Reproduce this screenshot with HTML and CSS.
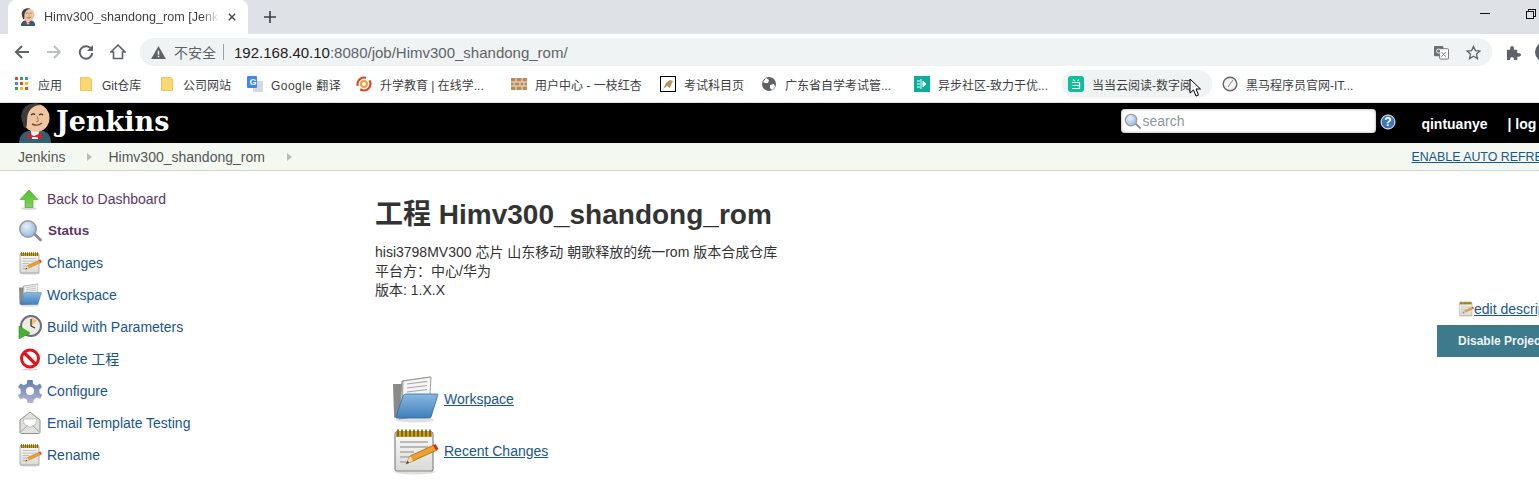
FILE: index.html
```html
<!DOCTYPE html>
<html lang="zh-CN">
<head>
  <meta charset="UTF-8">
  <meta name="viewport" content="width=device-width, initial-scale=1.0">
  <title>Himv300_shandong_rom [Jenkins]</title>
  <link rel="stylesheet" href="styles.css">
</head>
<body>
  <!-- icons used more than once -->
  <svg class="defs" width="0" height="0" aria-hidden="true">
    <defs>
      <linearGradient id="blueFront" x1="0" y1="0" x2="0" y2="1">
        <stop offset="0" stop-color="#8ab8e0"/>
        <stop offset="1" stop-color="#3f7fbc"/>
      </linearGradient>
      <linearGradient id="pageFill" x1="0" y1="0" x2="0" y2="1">
        <stop offset="0" stop-color="#fbfbfa"/>
        <stop offset="1" stop-color="#d9d9d6"/>
      </linearGradient>
      <linearGradient id="gearFill" x1="0" y1="0" x2="0" y2="1">
        <stop offset="0" stop-color="#5f7fae"/>
        <stop offset="1" stop-color="#b7b3d4"/>
      </linearGradient>
      <linearGradient id="greenFill" x1="0" y1="0" x2="0" y2="1">
        <stop offset="0" stop-color="#4fc42e"/>
        <stop offset="1" stop-color="#7fd05a"/>
      </linearGradient>
      <radialGradient id="glassFill" cx="0.4" cy="0.35" r="0.7">
        <stop offset="0" stop-color="#e6f1fa"/>
        <stop offset="1" stop-color="#8fb6dc"/>
      </radialGradient>
      <symbol id="i-notepad" viewBox="0 0 48 48">
        <ellipse cx="24" cy="45" rx="20" ry="2.5" fill="#000" opacity=".12"/>
        <rect x="4" y="5" width="38" height="39" rx="2" fill="url(#pageFill)" stroke="#858585" stroke-width="1.2"/>
        <rect x="5" y="4" width="36" height="6" fill="#c9a227"/>
        <path d="M7 3v6M11 3v6M15 3v6M19 3v6M23 3v6M27 3v6M31 3v6M35 3v6M39 3v6" stroke="#6e5a12" stroke-width="1.6" stroke-linecap="round"/>
        <path d="M9 15h28M9 20h28M9 25h14M9 30h10M9 35h6" stroke="#a9a9a6" stroke-width="1.3"/>
        <path d="M15 37l4-8 24-11 3 5-24 11z" fill="#eda02b" stroke="#8f5a10" stroke-width=".7"/>
        <path d="M15 37l4-8 3 5z" fill="#efd9b0"/>
        <path d="M15 37l1.500-3 1.800 1.500z" fill="#333"/>
        <path d="M42 18.500l2.500-1.500 3 5-2 1.500z" fill="#e0242a"/>
      </symbol>
      <symbol id="i-folder" viewBox="0 0 48 48">
        <ellipse cx="24" cy="45" rx="19" ry="2.5" fill="#000" opacity=".12"/>
        <path d="M2 9h8l3-3 0 36-8 1c-1.500 0-2-1-2-2z" fill="#8a8a88"/>
        <path d="M8 44l3-38 28-4-2 38z" fill="#d0d0ce" stroke="#8a8a88" stroke-width=".8"/>
        <path d="M12 6l28-4-2 36-27 5z" fill="#f4f4f2" stroke="#8a8a88" stroke-width=".8"/>
        <path d="M16 9l20-2.500M16 13l20-2.500M16 17l20-2.500" stroke="#a5a5a3" stroke-width="1.200"/>
        <path d="M16 19h30c.8 0 1 .6.8 1.200L40 42c-.3.8-.8 1-1.500 1H6c-1 0-1.300-.6-1-1.500L12 21c.4-1.300 2-2 4-2z" fill="url(#blueFront)" stroke="#35699e" stroke-width=".8"/>
      </symbol>
      <symbol id="i-butler" viewBox="0 0 34 40">
        <path d="M1 40c0-7 4-11 9-12h15c5 1 8 5 8 12z" fill="#2f5f70"/>
        <path d="M13 28h8l-1 8h-6z" fill="#f2f2f0"/>
        <path d="M11 31l5 2 5-2 3-1v6l-6-2h-3l-6 2v-6z" fill="#d8202a"/>
        <ellipse cx="18" cy="15" rx="13.500" ry="14" fill="#f0c5a0"/>
        <path d="M5 21C1 12 4 3 13 1c3-1 7-1 10 1C14 2 9 8 9 18c0 2 0 5-1 7-2 0-3-2-3-4z" fill="#3c3c3c"/>
        <path d="M13 12c2-1.500 3-1.500 4 0M21 12c1.500-1 3-1 4 0" stroke="#333" stroke-width="1.200" fill="none"/>
        <path d="M14 21c3 1.500 7 1.500 10-1" stroke="#7a4a30" stroke-width="1.400" fill="none"/>
        <path d="M19 13l1.500 5-2.500.8" stroke="#b37a55" stroke-width="1" fill="none"/>
      </symbol>
      <symbol id="i-lens" viewBox="0 0 24 24">
        <path d="M14.500 15l2-2 7 7c.6.6.6 1.500 0 2-.6.6-1.500.6-2 0z" fill="#8d8d8b"/>
        <circle cx="10" cy="10" r="8.200" fill="url(#glassFill)" stroke="#9a9a98" stroke-width="1.600"/>
      </symbol>
    </defs>
  </svg>

  <div class="tabstrip">
    <div class="tab">
      <svg class="tab-favicon"><use href="#i-butler"/></svg>
      <span class="tab-title">Himv300_shandong_rom [Jenkins]</span>
      <svg class="tab-close" viewBox="0 0 10 10"><path d="M1 1l8 8M9 1l-8 8"/></svg>
    </div>
    <svg class="tab-new" viewBox="0 0 12 12"><path d="M6 0v12M0 6h12"/></svg>
    <div class="window-btns">
      <span class="win-min"></span>
      <span class="win-restore"></span>
    </div>
  </div>

  <div class="toolbar">
    <svg class="nav-icon" viewBox="0 0 16 16"><path d="M15 8H2M8 2L2 8l6 6" class="nav-stroke"/></svg>
    <svg class="nav-icon" viewBox="0 0 16 16"><path d="M1 8h13M8 2l6 6-6 6" class="nav-stroke nav-off"/></svg>
    <svg class="nav-icon" viewBox="0 0 16 16"><path d="M13.500 5.500A6.200 6.200 0 1 0 14.200 9" class="nav-stroke"/><path d="M15 1v6H9z" fill="#5f6368"/></svg>
    <svg class="nav-icon" viewBox="0 0 16 16"><path d="M8 1L1 8h2.500v6.500h9V8H15z" class="nav-stroke nav-thin"/></svg>
    <div class="omnibox">
      <svg class="warn" viewBox="0 0 16 14"><path d="M8 0l8 14H0z" fill="#5f6368"/><path d="M7.200 5h1.600v4.500H7.200zM7.200 10.500h1.600V12H7.200z" fill="#f1f3f4"/></svg>
      <span class="insecure">不安全</span>
      <span class="omni-sep"></span>
      <span class="url"><b>192.168.40.10</b>:8080/job/Himv300_shandong_rom/</span>
      <svg class="omni-translate" viewBox="0 0 16 16"><rect x="0" y="1" width="10" height="11" rx="1" fill="#6b6f73"/><rect x="6" y="4" width="9.500" height="11" rx="1" fill="#fff" stroke="#6b6f73"/><path d="M8 7.500l4.500 5M12.500 7.500l-4.500 5" stroke="#6b6f73"/><circle cx="5" cy="6.500" r="2.200" fill="none" stroke="#fff"/></svg>
      <svg class="omni-star" viewBox="0 0 16 16"><path d="M8 1.500l2 4.500 4.800.5-3.600 3.200 1 4.800L8 12l-4.200 2.500 1-4.800L1.200 6.500 6 6z" fill="none" stroke="#5f6368" stroke-width="1.400"/></svg>
    </div>
    <svg class="puzzle" viewBox="0 0 16 16"><path d="M1 5h3.500C4 2 5.500 1 6.500 1S9 2 8.500 5H12v3.500c3-.5 4 1 4 2s-1 2.500-4 2V16H8.500c.5-2.500-1-3-2-3s-2.500.5-2 3H1z" fill="#5f6368"/></svg>
    <span class="avatar"></span>
  </div>

  <div class="bookmarks">
    <a class="bm bm-apps">
      <svg class="bm-icon" viewBox="0 0 14 14">
        <path d="M0 0h3v3H0z" fill="#ea4335"/><path d="M5 0h3v3H5z" fill="#34a853"/><path d="M10 0h3v3h-3z" fill="#4285f4"/>
        <path d="M0 5h3v3H0z" fill="#4285f4"/><path d="M5 5h3v3H5z" fill="#ea4335"/><path d="M10 5h3v3h-3z" fill="#fbbc04"/>
        <path d="M0 10h3v3H0z" fill="#34a853"/><path d="M5 10h3v3H5z" fill="#fbbc04"/><path d="M10 10h3v3h-3z" fill="#ea4335"/>
      </svg>
      应用
    </a>
    <a class="bm">
      <svg class="bm-icon" viewBox="0 0 16 16"><path d="M2.500 1.500h9l2 1.500v11.500h-11z" fill="#fbd774" stroke="#edc65a"/></svg>
      Git仓库
    </a>
    <a class="bm">
      <svg class="bm-icon" viewBox="0 0 16 16"><path d="M2.500 1.500h9l2 1.500v11.500h-11z" fill="#fbd774" stroke="#edc65a"/></svg>
      公司网站
    </a>
    <a class="bm bm-google">
      <svg class="bm-icon" viewBox="0 0 16 16"><rect x="6" y="5" width="10" height="11" fill="#d5d8dc"/><rect x="0" y="0" width="10" height="12" rx="1" fill="#4285f4"/><text x="2.500" y="9" class="g-letter">G</text></svg>
      Google 翻译
    </a>
    <a class="bm">
      <svg class="bm-icon" viewBox="0 0 16 16"><circle cx="8" cy="8" r="6.500" fill="none" stroke="#d9482b" stroke-width="2.200" stroke-dasharray="14 4"/><circle cx="8" cy="8" r="3" fill="none" stroke="#e9a23b" stroke-width="2"/></svg>
      升学教育 | 在线学...
    </a>
    <a class="bm">
      <svg class="bm-icon" viewBox="0 0 16 16"><rect y="2" width="16" height="12" fill="#b58a5c"/><path d="M0 6h16M0 10h16M5 2v4M11 2v4M3 6v4M9 6v4M13 6v4M5 10v4M11 10v4" stroke="#efe3d2"/></svg>
      用户中心 - 一枝红杏
    </a>
    <a class="bm">
      <svg class="bm-icon" viewBox="0 0 16 16"><rect x=".5" y=".5" width="15" height="15" fill="#fff" stroke="#000"/><path d="M3 13l3-6 4-3 3 1-2 4-1 3-3-2z" fill="#b8945a"/></svg>
      考试科目页
    </a>
    <a class="bm">
      <svg class="bm-icon" viewBox="0 0 16 16"><circle cx="8" cy="8" r="7" fill="#5f6368"/><path d="M5 2l3 2-1 3-3 0-2-1zM9 9l4-1 1 3-3 3-2-2z" fill="#fff"/></svg>
      广东省自学考试管...
    </a>
    <a class="bm">
      <svg class="bm-icon" viewBox="0 0 16 16"><rect width="16" height="16" fill="#0cae9b"/><path d="M7 3v10M3 5h3M3 8h3M3 11h3M9 5l3 3-3 3z" stroke="#fff" fill="#fff"/></svg>
      异步社区-致力于优...
    </a>
    <a class="bm bm-hover">
      <svg class="bm-icon" viewBox="0 0 16 16"><rect width="16" height="16" rx="3" fill="#0cc09a"/><path d="M5 3.500l1.500 1.500M11 3.500L9.500 5M4 6.500h7.500v6H4M4.500 9.500h7" stroke="#fff" fill="none" stroke-width="1.200"/></svg>
      <span class="bm-cut">当当云阅读-数字阅读</span>
      <svg class="cursor" viewBox="0 0 13 20"><path d="M1 1v14l3.500-3 2.500 6 2.500-1-2.500-6h4.500z" fill="#fff" stroke="#000"/></svg>
    </a>
    <a class="bm">
      <svg class="bm-icon" viewBox="0 0 16 16"><circle cx="8" cy="8" r="6.800" fill="#f4f4f4" stroke="#666" stroke-width="1.400"/><path d="M8 8l3-4M8 8l-2 3" stroke="#888"/></svg>
      黑马程序员官网-IT...
    </a>
  </div>

  <header class="jenkins-head">
    <svg class="logo-butler"><use href="#i-butler"/></svg>
    <span class="logo-text">Jenkins</span>
    <div class="search-box">
      <svg class="search-lens"><use href="#i-lens"/></svg>
      <span class="search-hint">search</span>
    </div>
    <svg class="help" viewBox="0 0 16 16"><circle cx="8" cy="8" r="7" fill="#3c78b5" stroke="#fff"/><text x="8" y="12" class="help-mark">?</text></svg>
    <a class="user">qintuanye</a>
    <a class="logout">| log out</a>
  </header>

  <div class="breadcrumbs">
    <a class="crumb">Jenkins</a>
    <span class="crumb-arrow"></span>
    <a class="crumb">Himv300_shandong_rom</a>
    <span class="crumb-arrow"></span>
    <a class="auto-refresh">ENABLE AUTO REFRESH</a>
  </div>

  <div class="page">
    <nav class="side">
      <a class="task task-visited">
        <svg class="task-icon" viewBox="0 0 24 24"><ellipse cx="11" cy="21.500" rx="8" ry="1.500" fill="#000" opacity=".15"/><path d="M11 3l9 9.500h-5v8H7v-8H2z" fill="url(#greenFill)" stroke="#4a9a2c" stroke-width=".6"/></svg>
        Back to Dashboard
      </a>
      <a class="task task-current">
        <svg class="task-icon"><use href="#i-lens"/></svg>
        Status
      </a>
      <a class="task">
        <svg class="task-icon"><use href="#i-notepad"/></svg>
        Changes
      </a>
      <a class="task">
        <svg class="task-icon"><use href="#i-folder"/></svg>
        Workspace
      </a>
      <a class="task">
        <svg class="task-icon" viewBox="0 0 24 24">
          <circle cx="13" cy="11" r="10" fill="#ecebe4" stroke="#6f6a85" stroke-width="2"/>
          <path d="M13 11V3a8 8 0 0 1 6 3z" fill="#f0c27a"/>
          <path d="M13 4v7l4 2" stroke="#333" stroke-width="1.200" fill="none"/>
          <path d="M1 11l11 7-11 6z" fill="#44b52a" stroke="#2f8a1c" stroke-width=".6"/>
        </svg>
        Build with Parameters
      </a>
      <a class="task">
        <svg class="task-icon" viewBox="0 0 24 24"><ellipse cx="12" cy="22.500" rx="8" ry="1.200" fill="#000" opacity=".15"/><circle cx="12" cy="11.500" r="8.500" fill="#fff" stroke="#e0141c" stroke-width="3"/><path d="M6 5.500l12 12" stroke="#e0141c" stroke-width="3.200"/></svg>
        Delete 工程
      </a>
      <a class="task">
        <svg class="task-icon" viewBox="0 0 24 24">
          <g fill="url(#gearFill)">
            <path d="M9.500 1h5l.8 4 3.400 1.500 3.300-2 2 3.500-2.700 2.700.3 3.300 2.700 2-2 3.800-3.700-1.300-2.600 2L15 24H9.500l-.8-3.500-3-1.500L2.500 20.500 0 16.500l2.700-2.300V10.500L0 8l2.500-3.500 3.200 1.700 3-1.500z"/>
          </g>
          <circle cx="12" cy="12" r="4" fill="#fff"/>
        </svg>
        Configure
      </a>
      <a class="task">
        <svg class="task-icon" viewBox="0 0 24 24"><path d="M2 9l10-8 10 8v12c0 1-.5 1.500-1.500 1.500h-17C2.500 22.500 2 22 2 21z" fill="#e0e0de" stroke="#8f8f8d"/><path d="M5.500 8h13l-.5 5-5 3h-2l-5-3z" fill="#fff" stroke="#b0b0ae" stroke-width=".7"/><path d="M2.500 21l7-6.500M21.500 21l-7-6.500" stroke="#a3a3a1"/></svg>
        Email Template Testing
      </a>
      <a class="task">
        <svg class="task-icon"><use href="#i-notepad"/></svg>
        Rename
      </a>
    </nav>

    <main class="content">
      <h1 class="job-title">工程 Himv300_shandong_rom</h1>
      <div class="job-desc">
        hisi3798MV300 芯片 山东移动 朝歌释放的统一rom 版本合成仓库<br>
        平台方：中心/华为<br>
        版本: 1.X.X
      </div>
      <table class="job-links">
        <tr>
          <td><svg class="link-icon"><use href="#i-folder"/></svg></td>
          <td><a href="#">Workspace</a></td>
        </tr>
        <tr>
          <td><svg class="link-icon"><use href="#i-notepad"/></svg></td>
          <td><a href="#">Recent Changes</a></td>
        </tr>
      </table>
    </main>

    <aside class="actions">
      <div class="edit-desc">
        <svg class="edit-icon"><use href="#i-notepad"/></svg><a href="#">edit description</a>
      </div>
      <button class="disable-btn">Disable Project</button>
    </aside>
  </div>
</body>
</html>
```

FILE: styles.css
```css
* {
  box-sizing: border-box;
}

html, body {
  margin: 0;
  height: 485px;
  overflow: hidden;
}

body {
  font-family: "Liberation Sans", "Noto Sans CJK SC", sans-serif;
  font-size: 14px;
  color: #333;
  background: #fff;
}

.defs {
  position: absolute;
}

/* browser tab strip */
.tabstrip {
  height: 34px;
  background: #dee1e6;
  display: flex;
  align-items: center;
}

.tab {
  width: 240px;
  height: 34px;
  margin-left: 8px;
  background: #fff;
  border-radius: 8px 8px 0 0;
  display: flex;
  align-items: center;
  padding-left: 12px;
}

.tab-favicon {
  width: 16px;
  height: 18px;
  flex: none;
}

.tab-title {
  width: 175px;
  margin-left: 8px;
  font-size: 12.6px;
  color: #3c4043;
  white-space: nowrap;
  overflow: hidden;
  -webkit-mask-image: linear-gradient(to right, #000 90%, transparent);
  mask-image: linear-gradient(to right, #000 90%, transparent);
}

.tab-close {
  width: 8px;
  height: 8px;
  margin-left: 9px;
  flex: none;
}

.tab-close path {
  stroke: #45484c;
  stroke-width: 1.8;
}

.tab-new {
  width: 12px;
  height: 12px;
  margin-left: 16px;
}

.tab-new path {
  stroke: #3c4043;
  stroke-width: 1.6;
}

.window-btns {
  margin-left: auto;
  display: flex;
  align-items: flex-start;
  gap: 36px;
  padding: 0 5px 0 0;
  height: 20px;
}

.win-min {
  width: 10px;
  height: 1px;
  margin-top: 6px;
  background: #111;
}

.win-restore {
  width: 8px;
  height: 8px;
  margin-top: 4px;
  border: 1px solid #111;
  box-shadow: 2px -2px 0 -1px #dee1e6, 2px -2px 0 0 #111;
}

/* address bar */
.toolbar {
  height: 32px;
  display: flex;
  align-items: center;
  padding: 4px 0 0 14px;
}

.nav-icon {
  width: 16px;
  height: 16px;
  margin-right: 16px;
  flex: none;
}

.nav-stroke {
  fill: none;
  stroke: #5f6368;
  stroke-width: 2;
}

.nav-off {
  stroke: #bdc1c6;
}

.nav-thin {
  stroke-width: 1.6;
}

.omnibox {
  width: 1352px;
  height: 28px;
  margin-left: -2px;
  background: #f0f3f4;
  border-radius: 14px;
  display: flex;
  align-items: center;
  padding-left: 11px;
  flex: none;
}

.warn {
  width: 15px;
  height: 13px;
}

.insecure {
  margin-left: 8px;
  font-size: 14px;
  color: #5f6368;
}

.omni-sep {
  width: 1px;
  height: 16px;
  margin: 0 10px 0 7px;
  background: #9aa0a6;
}

.url {
  font-size: 15px;
  color: #5f6368;
}

.url b {
  font-weight: normal;
  color: #202124;
}

.omni-translate {
  width: 15px;
  height: 15px;
  margin-left: auto;
}

.omni-star {
  width: 15px;
  height: 15px;
  margin: 0 11px 0 17px;
}

.puzzle {
  width: 15px;
  height: 15px;
  margin-left: 14px;
  flex: none;
}

.avatar {
  width: 20px;
  height: 20px;
  margin-left: 14px;
  border-radius: 50%;
  background: #5f6368;
  flex: none;
}

/* bookmarks bar */
.bookmarks {
  height: 37px;
  display: grid;
  grid-template-columns: 63px 81px 88px 109px 155px 149px 101px 153px 154px 154px auto;
  align-items: center;
  padding-left: 9px;
  border-bottom: 1px solid #dadce0;
}

.bm {
  height: 28px;
  display: flex;
  align-items: center;
  gap: 8px;
  padding-left: 6px;
  font-size: 12px;
  color: #3c4043;
  white-space: nowrap;
  position: relative;
}

.bm-icon {
  width: 16px;
  height: 16px;
  flex: none;
}

.bm-apps .bm-icon {
  width: 14px;
  height: 14px;
  margin-right: 1px;
}

.bm-google {
  letter-spacing: .45px;
}

.g-letter {
  font-size: 9px;
  font-weight: bold;
  fill: #fff;
}

.bm-hover {
  background: #f0f3f4;
  border-radius: 14px;
  width: 150px;
}

.bm-cut {
  width: 100px;
  overflow: hidden;
}

.cursor {
  position: absolute;
  left: 127px;
  top: 8px;
  width: 13px;
  height: 20px;
}

/* jenkins header */
.jenkins-head {
  height: 40px;
  background: #000;
  display: flex;
  align-items: center;
  padding-left: 18px;
  white-space: nowrap;
}

.logo-butler {
  width: 34px;
  height: 40px;
  flex: none;
}

.logo-text {
  margin-left: 4px;
  margin-bottom: 4px;
  font-family: "DejaVu Serif", serif;
  font-size: 27px;
  font-weight: bold;
  color: #fff;
}

.search-box {
  width: 255px;
  height: 24px;
  margin-left: auto;
  margin-bottom: 4px;
  background: #fff;
  border-radius: 4px;
  box-shadow: inset 0 0 3px #999;
  display: flex;
  align-items: center;
  padding-left: 3px;
  flex: none;
}

.search-lens {
  width: 17px;
  height: 17px;
  flex: none;
}

.search-hint {
  margin-left: 1px;
  font-size: 14px;
  color: #8a96a3;
}

.help {
  width: 16px;
  height: 16px;
  margin-left: 4px;
  margin-bottom: 2px;
  flex: none;
}

.help-mark {
  font-size: 12px;
  font-weight: bold;
  fill: #fff;
  text-anchor: middle;
}

.user {
  margin-left: 25px;
  margin-top: 1px;
  font-weight: bold;
  color: #fff;
}

.logout {
  margin-left: 20px;
  margin-right: -23px;
  margin-top: 1px;
  font-weight: bold;
  color: #fff;
}

/* breadcrumb bar */
.breadcrumbs {
  height: 28px;
  background: #f3f8f1;
  border-bottom: 1px solid #d3d7cf;
  display: flex;
  align-items: center;
  padding-left: 18px;
  white-space: nowrap;
}

.crumb {
  color: #555;
}

.crumb-arrow {
  width: 0;
  height: 0;
  margin: 0 16px 0 22px;
  border-left: 5px solid #bbb;
  border-top: 4px solid transparent;
  border-bottom: 4px solid transparent;
}

.auto-refresh {
  margin-left: auto;
  margin-right: -21px;
  font-size: 12.4px;
  color: #19558f;
  text-decoration: underline;
}

/* main layout */
.page {
  display: flex;
}

.side {
  width: 375px;
  padding: 12px 0 0 18px;
  flex: none;
}

.task {
  height: 32px;
  display: flex;
  align-items: center;
  gap: 5px;
  line-height: 16px;
  color: #19558f;
}

.task-visited {
  color: #5c3566;
}

.task-current {
  color: #5c3566;
  font-weight: bold;
  font-size: 13.5px;
  gap: 6px;
}

.task-icon {
  width: 24px;
  height: 24px;
  flex: none;
}

.content {
  flex: 1;
  padding-top: 28px;
}

.job-title {
  margin: 0 0 12px;
  font-size: 28px;
  line-height: 32px;
  font-weight: bold;
  color: #333;
}

.job-desc {
  font-size: 14px;
  line-height: 19px;
}

.job-links {
  margin: 73px 0 0 16px;
  border-collapse: collapse;
}

.job-links td {
  padding: 0 5px 0 0;
  height: 52px;
}

.job-links a {
  color: #19558f;
}

.link-icon {
  display: block;
  width: 48px;
  height: 48px;
}

.actions {
  width: 102px;
  padding-top: 130px;
  flex: none;
  white-space: nowrap;
}

.edit-desc {
  margin-left: 21px;
  height: 16px;
  display: flex;
  align-items: center;
}

.edit-desc a {
  color: #19558f;
}

.edit-icon {
  width: 16px;
  height: 16px;
  flex: none;
}

.disable-btn {
  display: block;
  width: 140px;
  height: 32px;
  margin-top: 8px;
  padding: 0 0 0 21px;
  text-align: left;
  border: none;
  background: #3d7a8c;
  color: #eef3f5;
  font: bold 12px "Liberation Sans", sans-serif;
}
```
